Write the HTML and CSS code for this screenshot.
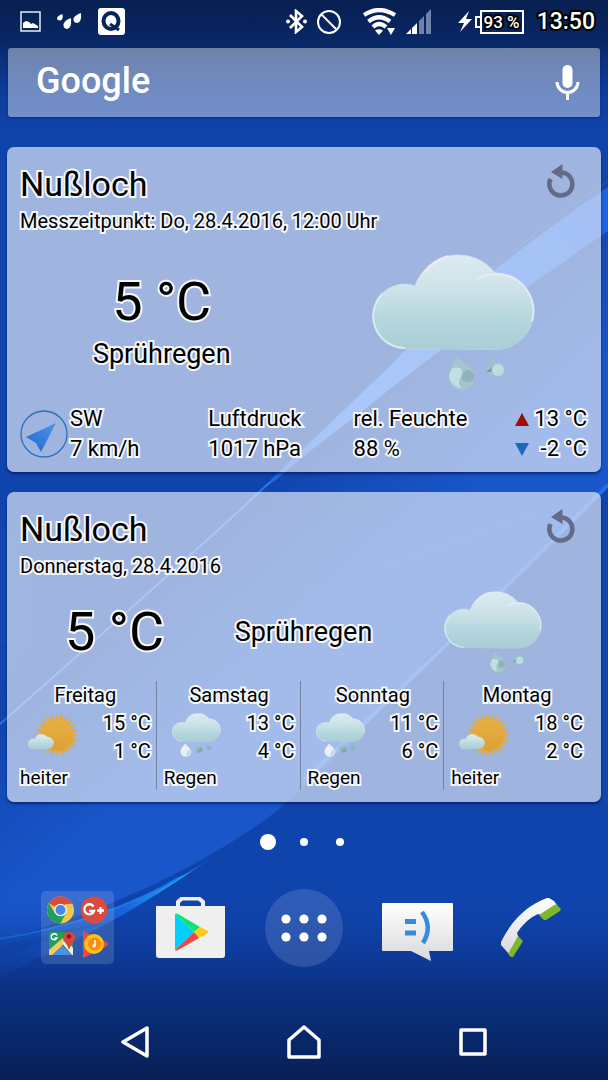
FILE: index.html
```html
<!DOCTYPE html>
<html lang="de">
<head>
<meta charset="utf-8">
<meta name="viewport" content="width=device-width, initial-scale=1">
<title>Startbildschirm</title>
<link rel="stylesheet" href="styles.css">
</head>
<body>
<svg class="wallpaper" viewBox="0 0 608 1080" preserveAspectRatio="none" aria-hidden="true">
  <defs>
    <linearGradient id="top" x1="0" y1="0" x2="0" y2="1">
      <stop offset="0" stop-color="#071f50"/><stop offset=".3" stop-color="#08255f" stop-opacity=".9"/><stop offset="1" stop-color="#0f40a5" stop-opacity="0"/>
    </linearGradient>
    <linearGradient id="bottom" x1="0" y1="0" x2="0" y2="1">
      <stop offset="0" stop-color="#0c3a98" stop-opacity="0"/><stop offset=".5" stop-color="#0a2c77" stop-opacity=".8"/><stop offset="1" stop-color="#071f54"/>
    </linearGradient>
    <linearGradient id="glow" gradientUnits="userSpaceOnUse" x1="400" y1="380" x2="487" y2="478">
      <stop offset="0" stop-color="#1146b0"/><stop offset="1" stop-color="#1956ca"/>
    </linearGradient>
    <linearGradient id="band" gradientUnits="userSpaceOnUse" x1="250" y1="500" x2="608" y2="200">
      <stop offset="0" stop-color="#1e63dc"/><stop offset=".3" stop-color="#2a76f0"/><stop offset="1" stop-color="#1b62e4"/>
    </linearGradient>
    <linearGradient id="ray" gradientUnits="userSpaceOnUse" x1="0" y1="950" x2="210" y2="860">
      <stop offset="0" stop-color="#1450c2"/><stop offset=".6" stop-color="#1b6ae2"/><stop offset=".85" stop-color="#10b4fa"/><stop offset="1" stop-color="#10c4ff" stop-opacity="0"/>
    </linearGradient>
  </defs>
  <rect width="608" height="1080" fill="#1044ad"/>
  <path d="M608 230L530 283L360 415L270 482L0 725V940Q150 900 265 820Q330 770 430 655L608 488Z" fill="url(#glow)"/>
  <path d="M608 187Q470 280 390 366L258 492L276 480Q310 450 360 413Q450 340 608 231Z" fill="url(#band)"/>
  <path d="M608 181Q530 235 440 310" fill="none" stroke="#2867cf" stroke-width="1" opacity=".6"/>
  <path d="M270 482Q200 548 0 724" fill="none" stroke="#2a74e8" stroke-width="2"/>
  <path d="M0 520Q70 600 0 690Z" fill="#164cb8" opacity=".4"/>
  <path d="M0 515Q50 560 130 607M100 535Q260 500 360 490M0 640Q180 650 540 510" fill="none" stroke="#2865cf" opacity=".35"/>
  <path d="M608 485Q480 615 304 780" fill="none" stroke="#2575ea" stroke-width="4" opacity=".8"/>
  <path d="M0 938Q120 918 210 859Q130 914 84 935Q40 958 0 976Z" fill="url(#ray)"/>
  <path d="M0 946Q60 930 110 922Q60 935 0 957Z" fill="#0f46b4" opacity=".5"/>
  <path d="M0 939Q110 920 180 877" fill="none" stroke="#1e78ee" stroke-width="2"/>
  <rect width="608" height="145" fill="url(#top)"/>
  <rect y="900" width="608" height="180" fill="url(#bottom)"/>
</svg>

<svg class="sprites" width="0" height="0" aria-hidden="true">
  <defs>
    <linearGradient id="cloudfill" x1="0" y1="0" x2="0" y2="1">
      <stop offset="0" stop-color="#dcebf0"/><stop offset=".35" stop-color="#cde3e8"/><stop offset=".75" stop-color="#b0d5dc"/><stop offset="1" stop-color="#a9ced6"/>
    </linearGradient>
    <linearGradient id="sunfill" x1="0" y1="0" x2="0" y2="1">
      <stop offset="0" stop-color="#e6b043"/><stop offset="1" stop-color="#dda136"/>
    </linearGradient>
    <g id="cloud">
      <path d="M33 94.500A32 32 0 0 1 33 30Q38 30 43 32A46 46 0 0 1 123 19A38 38 0 0 1 124 95.500Z" fill="url(#cloudfill)" stroke="#d3e6ec" stroke-width="1" stroke-opacity=".7"/>
      <path d="M33 94A32 32 0 0 1 10 40" fill="none" stroke="#e0f0f3" stroke-width="2" opacity=".8"/>
      <path d="M52 19A46 46 0 0 1 76 2" fill="none" stroke="#f0effa" stroke-width="2" opacity=".8"/>
      <path d="M104 26Q113 20 124 20A37 37 0 0 1 160 67" fill="none" stroke="#ecedf8" stroke-width="2" opacity=".75"/>
    </g>
    <g id="drops">
      <path d="M84 103Q96 110 101 117A13 13 0 1 1 77 121Q79 113 84 103Z" fill="#a4c4ce"/>
      <path d="M80 114Q92 112 90 120Q84 130 90 134A13 13 0 0 1 77 121Z" fill="#bfe0e2"/>
      <path d="M90 126Q90 115 97 116Q105 121 101 126Q97 130 90 126Z" fill="#8fb2b9"/>
      <path d="M119 103Q123 108 128 109A8 8 0 1 1 118 121L114 118Q117 111 119 103Z" fill="#9fc1cc"/>
      <circle cx="126" cy="116" r="6" fill="#b9dedf"/>
      <path d="M114 118L120 113L119 118Z" fill="#7899b2"/>
    </g>
    <symbol id="drizzle" viewBox="0 0 163 137"><use href="#cloud"/><use href="#drops"/></symbol>
    <symbol id="rain" viewBox="0 0 163 147">
      <use href="#cloud"/>
      <path d="M43 102Q64 121 64 129A18 17 0 1 1 28 129Q30 116 43 102Z" fill="#e9f0f9"/>
      <path d="M47 143Q47 126 60 122Q68 140 47 143Z" fill="#c6d8e6"/>
      <circle cx="90" cy="121" r="13" fill="#98bdc4"/><path d="M84 129Q84 119 100 116Q106 130 90 134Z" fill="#83a6b3"/>
      <circle cx="123" cy="117" r="8" fill="#8eb4bd"/>
    </symbol>
    <path id="tip" d="M-2.600 -14L0 -22L2.600 -14Z"/>
    <g id="tips"><use href="#tip"/><use href="#tip" transform="rotate(15)"/><use href="#tip" transform="rotate(30)"/></g>
    <symbol id="fair" viewBox="0 0 52 44">
      <g transform="translate(30 22)">
        <g fill="#e2aa3e">
          <use href="#tips"/><use href="#tips" transform="rotate(45)"/><use href="#tips" transform="rotate(90)"/><use href="#tips" transform="rotate(135)"/>
          <use href="#tips" transform="rotate(180)"/><use href="#tips" transform="rotate(225)"/><use href="#tips" transform="rotate(270)"/><use href="#tips" transform="rotate(315)"/>
        </g>
        <circle r="15.500" fill="url(#sunfill)"/>
      </g>
      <use href="#cloud" transform="translate(1 21) scale(.158)"/>
    </symbol>
    <symbol id="reload" viewBox="0 0 28 34">
      <path d="M14 8.500A11.500 11.500 0 1 1 3.500 15" fill="none" stroke="#626c89" stroke-width="4.600"/>
      <path d="M4 8L15.500 0V15Z" fill="#626c89"/>
    </symbol>
  </defs>
</svg>

<div class="screen">
  <header class="status">
    <div class="status-left">
      <svg width="21" height="21" viewBox="0 0 21 21"><path d="M1 1H20V20H1Z" fill="none" stroke="#e8ebf2" stroke-width="1.500"/><path d="M3 17V12L6 10L9 11L11 13L13 12L18 15V17Z" fill="#fff"/></svg>
      <svg width="25" height="17" viewBox="0 0 25 17" fill="#fff"><path d="M5.500 1Q6.500 7 3 7.500Q0 7.500 0 5Q1 2.500 5.500 1Z"/><path d="M14 5Q15 15.500 10 16Q6 15.500 6.500 11Q8 7 14 5Z"/><path d="M24 0Q25 9.500 20 10Q16 9.500 16.500 5.500Q18 2 24 0Z"/></svg>
      <svg width="27" height="27" viewBox="0 0 27 27"><rect width="27" height="27" rx="3" fill="#fff"/><ellipse cx="13" cy="13" rx="7.500" ry="8" fill="none" stroke="#08245c" stroke-width="4"/><path d="M12 16L21 22" stroke="#08245c" stroke-width="3"/></svg>
    </div>
    <div class="status-right">
      <svg width="21" height="25" viewBox="0 0 21 25"><path d="M4 6L16 18L10 23V2L16 7L4 19" fill="none" stroke="#fff" stroke-width="2.600"/><circle cx="2" cy="12.500" r="2" fill="#fff"/><circle cx="19" cy="12.500" r="2" fill="#fff"/></svg>
      <svg class="blocked" width="24" height="24" viewBox="0 0 24 24" fill="none" stroke="#fff" stroke-width="2"><circle cx="12" cy="12" r="11"/><path d="M4 4L20 20"/></svg>
      <svg class="wifi" width="33" height="27" viewBox="0 0 33 27"><g fill="none" stroke="#fff" stroke-width="4.200"><path d="M1 7Q16 -3 32 7"/><path d="M5.500 13.500Q16 5 27 13.500"/><path d="M10 19Q16 13 23 19"/></g><path d="M12 22.500Q16 20 20 22.500L16 27Z" fill="#fff"/><path d="M24 20H32L28 27Z" fill="#fff"/></svg>
      <svg class="signal" width="26" height="25" viewBox="0 0 26 25"><path d="M0 25L5 20V25ZM6 19L11 14V25H6Z" fill="#fff"/><path d="M13 12L18 7V25H13ZM20 5L25 0V25H20Z" fill="#6e82ab"/></svg>
      <svg class="bolt" width="14" height="21" viewBox="0 0 14 21"><path d="M11 0L0 12H6L2 21L14 8H8Z" fill="#fff"/></svg>
      <div class="battery"><span class="battery-tip"></span><span class="battery-text">93 %</span></div>
      <time class="clock">13:50</time>
    </div>
  </header>

  <form class="search">
    <button class="google" type="button">Google</button>
    <button class="mic" type="button" aria-label="Sprachsuche"><svg width="25" height="35" viewBox="0 0 25 35"><rect x="7.500" width="10" height="23" rx="5" fill="#fff"/><path d="M2 17A10.500 10.500 0 0 0 23 17M12.500 27V35" fill="none" stroke="#fff" stroke-width="3"/></svg></button>
  </form>

  <main class="widgets">
    <section class="card">
      <div class="head">
        <div><h2 class="place">Nußloch</h2><p class="when">Messzeitpunkt: Do, 28.4.2016, 12:00 Uhr</p></div>
        <button class="reload" type="button" aria-label="Aktualisieren"><svg width="28" height="34"><use href="#reload"/></svg></button>
      </div>
      <div class="stage">
        <div class="reading"><p class="degrees">5 °C</p><p class="condition">Sprühregen</p></div>
        <svg class="sky" width="163" height="137" role="img" aria-label="Sprühregen"><use href="#drizzle"/></svg>
      </div>
      <div class="details">
        <div class="wind">
          <svg width="48" height="48" viewBox="0 0 48 48"><defs><linearGradient id="needle" x1="1" y1="0" x2="0" y2="1"><stop offset="0" stop-color="#4b97e8"/><stop offset="1" stop-color="#2265cf"/></linearGradient></defs><circle cx="24" cy="24" r="23" fill="none" stroke="#2d6fb8" stroke-width="1.300"/><path d="M36 13L21 42L16 33L6 27Z" fill="url(#needle)"/></svg>
          <p>SW<br>7 km/h</p>
        </div>
        <p>Luftdruck<br>1017 hPa</p>
        <p>rel. Feuchte<br>88 %</p>
        <div class="range">
          <svg width="14" height="13" viewBox="0 0 14 13"><path d="M7 0L14 13H0Z" fill="#a30d0b"/></svg><span>13 °C</span>
          <svg width="14" height="13" viewBox="0 0 14 13"><path d="M0 0H14L7 13Z" fill="#1d6bb8"/></svg><span>-2 °C</span>
        </div>
      </div>
    </section>

    <section class="card">
      <div class="head">
        <div><h2 class="place">Nußloch</h2><p class="when">Donnerstag, 28.4.2016</p></div>
        <button class="reload" type="button" aria-label="Aktualisieren"><svg width="28" height="34"><use href="#reload"/></svg></button>
      </div>
      <div class="today">
        <p class="degrees">5 °C</p><p class="condition">Sprühregen</p>
        <svg width="98" height="82" role="img" aria-label="Sprühregen"><use href="#drizzle"/></svg>
      </div>
      <div class="forecast">
        <article class="day"><h3>Freitag</h3><svg class="fair" width="52" height="44"><use href="#fair"/></svg><p class="temps">15 °C<br>1 °C</p><p class="outlook">heiter</p></article>
        <article class="day"><h3>Samstag</h3><svg class="rain" width="49" height="44"><use href="#rain"/></svg><p class="temps">13 °C<br>4 °C</p><p class="outlook">Regen</p></article>
        <article class="day"><h3>Sonntag</h3><svg class="rain" width="49" height="44"><use href="#rain"/></svg><p class="temps">11 °C<br>6 °C</p><p class="outlook">Regen</p></article>
        <article class="day"><h3>Montag</h3><svg class="fair" width="52" height="44"><use href="#fair"/></svg><p class="temps">18 °C<br>2 °C</p><p class="outlook">heiter</p></article>
      </div>
    </section>
  </main>

  <div class="pages"><span class="page"><i class="dot current"></i></span><span class="page"><i class="dot"></i></span><span class="page"><i class="dot"></i></span></div>

  <div class="dock">
    <button type="button" aria-label="Google-Ordner">
      <svg width="73" height="73" viewBox="0 0 73 73">
        <rect width="73" height="73" rx="5" fill="#fff" fill-opacity=".14"/>
        <g transform="translate(19.500 19)"><circle r="13.500" fill="#efc84c"/><path d="M0 0L-11.700 -6.700A13.500 13.500 0 0 1 12 -6.200L5 -6Z" fill="#d84b3f"/><path d="M-11.700 -6.700L-5 4L5 4L0 13.500A13.500 13.500 0 0 1 -11.700 -6.700Z" fill="#1f9f5c"/><circle r="6.300" fill="#f1f1f1"/><circle r="5" fill="#4689e8"/></g>
        <g transform="translate(53 19)"><circle r="13.500" fill="#d84b3f"/><path d="M-.500 -3.500A5 5 0 1 0 0 1H-5M6.500 -3V4M3 .500H10" fill="none" stroke="#fff" stroke-width="2.300"/></g>
        <g transform="translate(8 41)"><path d="M0 0H18L24 10V23H0Z" fill="#249c5c"/><path d="M2 23L12 12L22 23Z" fill="#4d90e6"/><path d="M0 18L17 3L21 6L3 23H0Z" fill="#f2cd59"/><path d="M13 11L17 8L24 16V23H23Z" fill="#eee"/><path d="M8 3.500A3 3 0 1 0 8 6H5.500" fill="none" stroke="#fff" stroke-width="1.500"/><path d="M20 18Q18 12 15 9A6 6 0 1 1 25 9Q22 12 20 18Z" fill="#d7473d"/><circle cx="20" cy="4.500" r="2.200" fill="#7c1c1b"/></g>
        <path d="M42 40L67 52Q67 54 66 55L42 67Z" fill="#ee4b3b"/><circle cx="53" cy="53" r="10" fill="#fec216"/><circle cx="53.500" cy="53" r="6.500" fill="#f88d12"/><path d="M54 49V55" stroke="#fff" stroke-width="1.500"/><circle cx="52.900" cy="55" r="1.600" fill="#fff"/>
      </svg>
    </button>
    <button type="button" aria-label="Play Store">
      <svg width="69" height="61" viewBox="0 0 69 61"><path d="M22 10V5L26 1.500H43L47 5V10" fill="none" stroke="#efefef" stroke-width="4"/><path d="M0 9H69V58Q69 61 66 61H3Q0 61 0 58Z" fill="#efefef"/><path d="M19 17V53L38 35Z" fill="#00cfff"/><path d="M19 17Q20 16 22 17L44 30L38 35Z" fill="#0be578"/><path d="M44 30L52 34Q53 35 52 36L43 41L38 35Z" fill="#ffc914"/><path d="M19 53Q20 54 22 53L43 41L38 35Z" fill="#f2473f"/></svg>
    </button>
    <button type="button" aria-label="Alle Apps">
      <svg width="78" height="78" viewBox="0 0 78 78"><circle cx="39" cy="39" r="39" fill="#fff" fill-opacity=".13"/><g fill="#fff"><circle cx="21" cy="30" r="4.600"/><circle cx="39" cy="30" r="4.600"/><circle cx="57" cy="30" r="4.600"/><circle cx="21" cy="48" r="4.600"/><circle cx="39" cy="48" r="4.600"/><circle cx="57" cy="48" r="4.600"/></g></svg>
    </button>
    <button type="button" aria-label="Nachrichten">
      <svg class="low" width="71" height="59" viewBox="0 0 71 59"><defs><linearGradient id="paper" x1="0" y1="0" x2="0" y2="1"><stop offset="0" stop-color="#fff"/><stop offset="1" stop-color="#d9d9dc"/></linearGradient></defs><path d="M1 0H70Q71 0 71 1V47Q71 48 70 48H47L49 58L29 48H1Q0 48 0 47V1Q0 0 1 0Z" fill="url(#paper)"/><path d="M23 18.500H34M23 30H34" stroke="#358be0" stroke-width="5"/><path d="M40 9Q51 24 41 40" fill="none" stroke="#358be0" stroke-width="4.500"/></svg>
    </button>
    <button type="button" aria-label="Telefon">
      <svg width="61" height="61" viewBox="0 0 61 61"><path d="M1 48V45Q17 12 47 1H49L54 4L57 8L41 18L38 17Q26 22 17 36L18 39L19 41L9 57Z" fill="url(#paper)"/><path d="M39 18L56 7L61 12L60 14L46 23H44ZM18 39L23 44L13 60H11L8 57Z" fill="#80b62b"/></svg>
    </button>
  </div>

  <nav class="nav">
    <button type="button" aria-label="Zurück"><svg width="28" height="32" viewBox="0 0 28 32"><path d="M26 2V30L2 16Z" fill="none" stroke="#fff" stroke-width="3.500" stroke-linejoin="round"/></svg></button>
    <button type="button" aria-label="Startseite"><svg width="34" height="34" viewBox="0 0 34 34"><path d="M2 32V15L17 2L32 15V32Z" fill="none" stroke="#fff" stroke-width="3.500" stroke-linejoin="round"/></svg></button>
    <button type="button" aria-label="Übersicht"><svg width="28" height="28" viewBox="0 0 28 28"><path d="M2 2H26V26H2Z" fill="none" stroke="#fff" stroke-width="3.500" stroke-linejoin="round"/></svg></button>
  </nav>
</div>
</body>
</html>
```

FILE: styles.css
```css
* { box-sizing: border-box; }

body {
  margin: 0;
  background: #1044ad;
  color: #000;
  font-family: Roboto, "Liberation Sans", sans-serif;
}

h2, h3, p { margin: 0; font-weight: 400; }
svg { display: block; flex: none; }

button {
  padding: 0;
  border: 0;
  background: none;
  color: inherit;
  font: inherit;
}

.wallpaper { position: absolute; z-index: -1; inset: 0; width: 100%; height: 100%; }
.sprites { position: absolute; }

.screen { display: flex; flex-direction: column; min-height: 100vh; }

/* Status bar */
.status {
  display: flex;
  justify-content: space-between;
  height: 48px;
  padding: 0 13px 5px 20px;
  color: #fff;
}
.status-left, .status-right { display: flex; align-items: center; }
.status-left { gap: 16px; }
.blocked { margin-left: 10px; }
.wifi { margin-left: 22px; }
.signal { margin-left: 10px; }
.bolt { margin-left: 26px; }
.battery { display: flex; align-items: center; margin: 0 13px 0 3px; }
.battery-tip { width: 5px; height: 12px; border: 2px solid #fff; border-right: 0; }
.battery-text {
  height: 24px;
  padding: 0 2px;
  border: 2px solid #fff;
  font-size: 17px;
  font-weight: 500;
  line-height: 20px;
}
.clock { font-size: 23px; font-weight: 500; line-height: 28px; }
.battery-text, .clock { -webkit-text-stroke: 4px #000; paint-order: stroke fill; }

/* Search */
.search {
  display: flex;
  align-items: center;
  justify-content: space-between;
  height: 69px;
  margin: 0 8px;
  padding: 0 20px 0 28px;
  border-radius: 3px;
  background: rgba(255, 255, 255, .41);
  box-shadow: 0 1px 2px rgba(0, 20, 80, .4);
}
.google {
  padding-bottom: 4px;
  color: #fff;
  font-size: 36px;
  font-weight: 500;
  line-height: 44px;
}

/* Weather cards */
.widgets { display: grid; gap: 20px; margin: 30px 7px 0; }
.card {
  padding: 17px 14px 8px 13px;
  border-radius: 7px;
  background: rgba(255, 255, 255, .6);
  box-shadow: 0 2px 3px rgba(0, 15, 70, .6);
  -webkit-text-stroke: 4px #f4f7fc;
  paint-order: stroke fill;
}
.head { display: flex; justify-content: space-between; align-items: flex-start; height: 73px; }
.place { font-size: 34px; line-height: 40px; }
.when { font-size: 20px; line-height: 34px; }
.reload { margin-right: 12px; }
.degrees { font-size: 54px; line-height: 64px; }
.condition { font-size: 27px; line-height: 40px; }

.stage {
  display: grid;
  grid-template-columns: 1fr 1fr;
  gap: 8px;
  height: 167px;
  padding-top: 17px;
  margin-right: -8px;
  justify-items: center;
}
.reading { padding-top: 16px; text-align: center; }

.details {
  display: grid;
  grid-template-columns: 188fr 145fr 161fr 72fr;
  font-size: 22px;
  line-height: 30px;
}
.wind { display: flex; align-items: center; gap: 2px; }
.range { display: grid; grid-template-columns: 14px 1fr; align-items: center; text-align: right; white-space: nowrap; }

.today {
  display: grid;
  grid-template-columns: 1fr 1fr 1fr;
  place-items: center;
  height: 99px;
}
.forecast { display: grid; grid-template-columns: repeat(4, 1fr); margin: 0 -1px 4px -7px; }
.day {
  display: grid;
  grid-template-columns: 1fr 1fr;
  padding: 0 5px 0 7px;
  border-right: 1px solid #7481a0;
  font-size: 20px;
  line-height: 28px;
}
.day:last-child { border-right: 0; }
.day h3 { grid-column: 1 / -1; font-size: 20px; text-align: center; }
.fair { margin: 4px 0 0 7px; }
.rain { margin: 4px 0 0 8px; }
.temps { text-align: right; white-space: nowrap; }
.outlook { grid-column: 1 / -1; font-size: 19px; line-height: 25px; }

/* Page indicator */
.pages { display: flex; justify-content: center; height: 80px; }
.page { display: grid; place-items: center; width: 36px; }
.dot { width: 8px; height: 8px; border-radius: 50%; background: #fff; }
.current { width: 16px; height: 16px; }

/* Dock and navigation */
.dock { display: grid; grid-template-columns: repeat(5, 1fr); align-items: center; height: 91px; padding: 0 21px; }
.dock button, .nav button { display: grid; place-items: center; }
.low { margin-top: 10px; }
.nav { display: grid; grid-template-columns: repeat(3, 1fr); align-items: center; height: 76px; margin-top: auto; padding: 0 50px; }
```
